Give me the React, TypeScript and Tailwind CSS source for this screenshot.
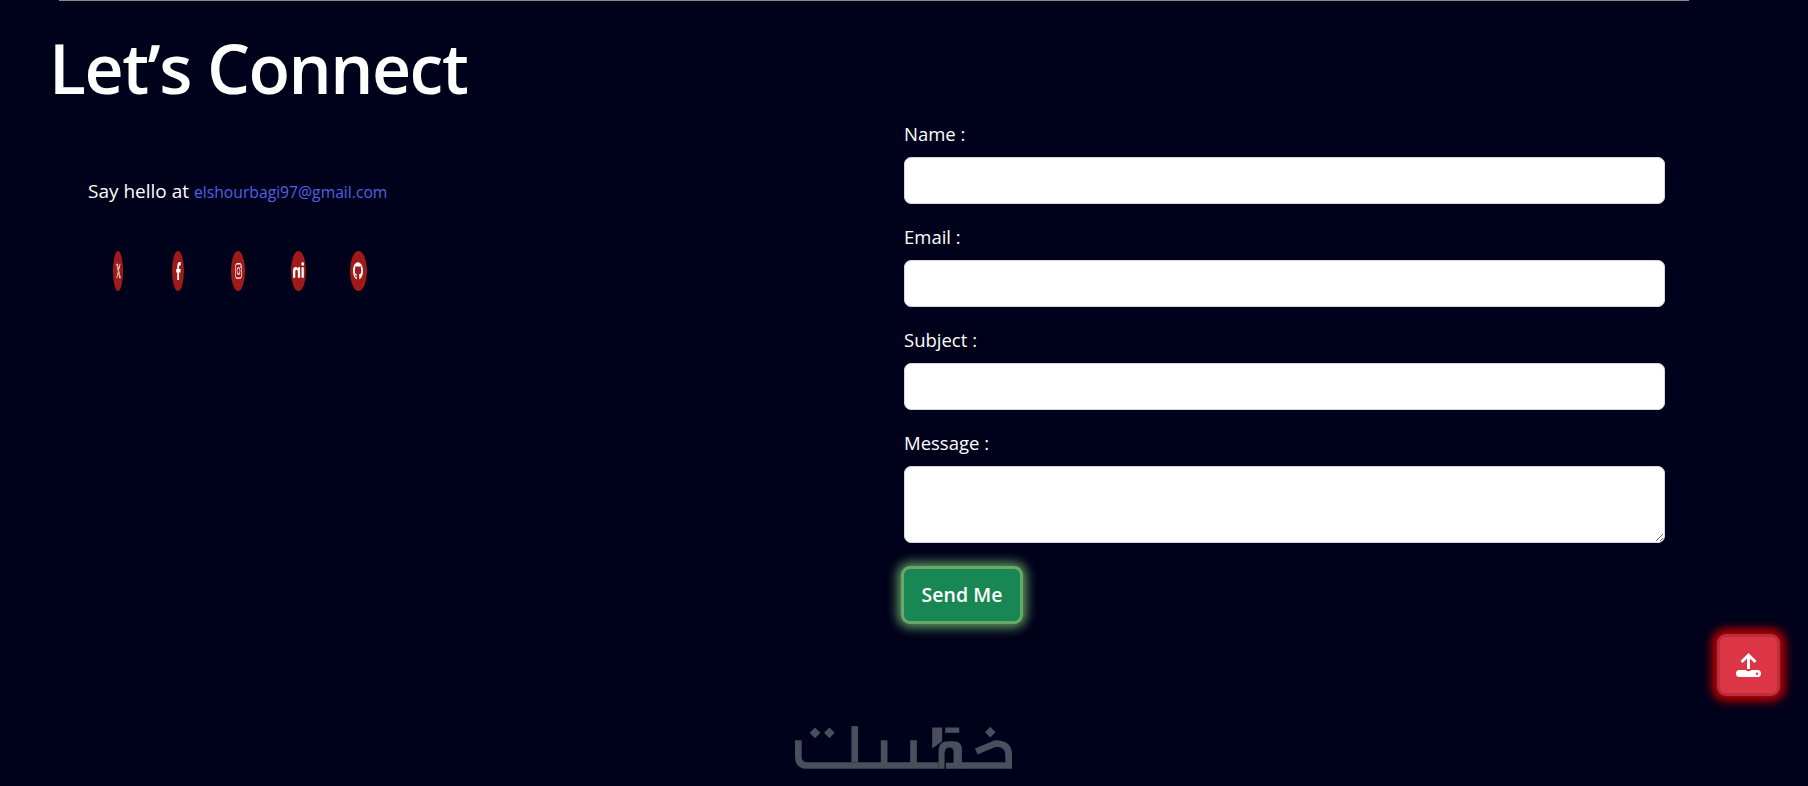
import { FaXTwitter, FaFacebookF, FaInstagram, FaLinkedinIn, FaGithub } from "react-icons/fa6";

const font = "font-['Open_Sans','Noto_Sans',sans-serif]";

const socials = [
  { Icon: FaXTwitter, wrap: "w-[10px]", icon: "w-[5px]" },
  { Icon: FaFacebookF, wrap: "w-[12px]", icon: "w-[5px]" },
  { Icon: FaInstagram, wrap: "w-[14px]", icon: "w-[7px]" },
  { Icon: FaLinkedinIn, wrap: "w-[15px]", icon: "w-[11px] -scale-x-100" },
  { Icon: FaGithub, wrap: "w-[17px]", icon: "w-[10px]" },
];

const fields = ["Name :", "Email :", "Subject :"];

function Logo() {
  return (
    <svg viewBox="0 0 650 128" className="h-[43px] w-[217px]" fill="#4b4e5c">
      <g fill="none" stroke="#4b4e5c" strokeWidth="20">
        <path d="M10 42V92Q10 118 36 118H430" />
        <path d="M179 0V108" />
        <path d="M267 42V118M355 42V118" />
        <path d="M495 118H640V85Q640 52 600 52L543 76" />
      </g>
      <path d="M60 4l16 16-16 16-16-16zM103 4l16 16-16 16-16-16z" />
      <path d="M411 4h30v41l-30 22z" />
      <path d="M450 4h42v16h-42z" />
      <path d="M430 128V72Q430 45 460 45H475Q500 45 500 70V128H452V110H475V76Q475 64 462 64Q450 64 448 80V128z" />
      <path d="M585 2l16 16-16 16-16-16z" />
    </svg>
  );
}

export default function App() {
  return (
    <div className={`relative h-[786px] overflow-hidden bg-[#00011a] text-white ${font}`}>
      <div className="ml-[59px] mr-[119px] h-px bg-[#8a8a8a]" />
      <h1 className="pl-[49px] pt-[22px] text-[68px] leading-[90px] font-semibold tracking-[-1.5px]">Let’s Connect</h1>
      <div className="flex pt-[7px] pl-[88px] pr-[143px]">
        <div className="w-[816px]">
          <p className="pt-[58px] text-[19px] leading-[27px]">
            Say hello at <a className="text-[15.7px] font-medium text-[#5262e6]">elshourbagi97@gmail.com</a>
          </p>
          <div className="mt-[45px] flex">
            {socials.map(({ Icon, wrap, icon }, i) => (
              <div key={i} className="flex w-[60px] justify-center">
                <div className={`flex h-[40px] items-center justify-center rounded-[50%] bg-[#a11a1a] ${wrap}`}>
                  <Icon className={`h-[18px] ${icon}`} preserveAspectRatio="none" />
                </div>
              </div>
            ))}
          </div>
        </div>
        <form className="flex-1">
          {fields.map((f) => (
            <div key={f} className="mb-[19px]">
              <label className="mb-[10px] block text-[18.5px] leading-[27px]">{f}</label>
              <input className="block h-[47px] w-full rounded-[7px] border border-[#d5d8dc] bg-white" />
            </div>
          ))}
          <label className="mb-[10px] block text-[18.5px] leading-[27px]">Message :</label>
          <textarea className="block h-[77px] w-full rounded-[7px] border border-[#d5d8dc] bg-white" />
          <button type="button" className="mt-[26px] h-[52px] w-[116px] rounded-[6px] bg-[#198754] text-[19.5px] font-semibold shadow-[0_0_0_3px_#68a868,0_0_12px_6px_#68a868]">
            Send Me
          </button>
        </form>
      </div>
      <button className="absolute left-[1720px] top-[637px] flex h-[56px] w-[57px] items-center justify-center rounded-[6px] bg-[#dc3545] shadow-[0_0_0_3px_#b8303c,0_0_10px_8px_#c00000]">
        <svg width="25" height="24" viewBox="0 0 25 24" fill="white">
          <path d="M12.500 0l8 8-2 2-4.500-4.500V16h-3V5.500L6.500 10l-2-2z" />
          <path fillRule="evenodd" d="M3.500 17H9.500q3 2.500 6 0h6q3.500 0 3.500 3.500T21.500 24h-18Q0 24 0 20.500T3.500 17zM21 19.500a1.200 1.200 0 100 2.400 1.200 1.200 0 000-2.400z" />
        </svg>
      </button>
      <div className="absolute bottom-[17px] left-[795px]">
        <Logo />
      </div>
    </div>
  );
}
